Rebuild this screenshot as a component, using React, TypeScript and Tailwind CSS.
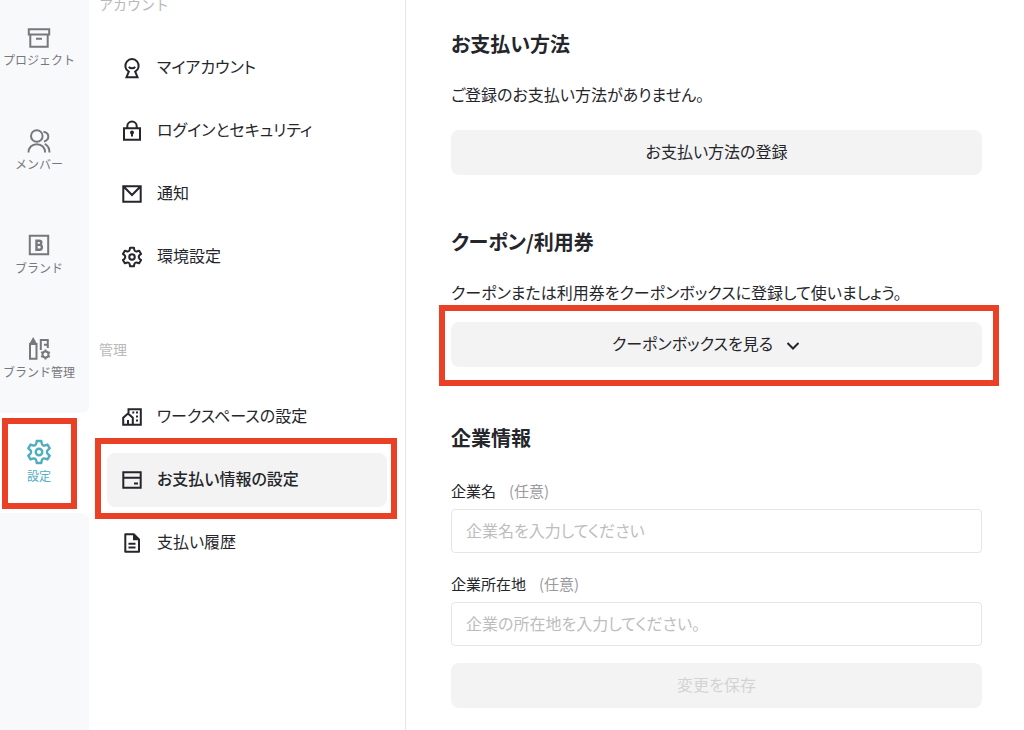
import type { ReactNode } from "react";
import clsx from "clsx";

type IconProps = { children: ReactNode; className?: string };

const Icon = ({ children, className = "size-6" }: IconProps) => (
  <svg
    viewBox="0 0 24 24"
    fill="none"
    stroke="currentColor"
    strokeWidth="2"
    aria-hidden="true"
    className={clsx("shrink-0", className)}
  >
    {children}
  </svg>
);

const GearIcon = ({ className }: { className?: string }) => (
  <Icon className={className}>
    <g transform="translate(12 12)" strokeLinejoin="round" strokeWidth="2.2">
      <path d="M-2.1-10.2H2.1L2.4-8.4Q3-5.200 5.900-6.200L7.800-6.900L9.900-3.300L8.400-2.100Q6.200 0 8.400 2.100L9.900 3.300L7.800 6.900L5.900 6.200Q3 5.200 2.400 8.400L2.100 10.200H-2.100L-2.400 8.400Q-3 5.200-5.900 6.200L-7.800 6.900L-9.900 3.300L-8.400 2.100Q-6.200 0-8.400-2.100L-9.900-3.300L-7.800-6.900L-5.900-6.200Q-3-5.200-2.400-8.400Z" />
      <circle r="3" />
    </g>
  </Icon>
);

const ProjectIcon = () => (
  <Icon>
    <path d="M1.8 4.2h20.4v5.3H1.8zM3.3 9.5v12.3h17.4V9.5M9 13.7h6" />
  </Icon>
);

const MembersIcon = () => (
  <Icon>
    <circle cx="9.8" cy="7" r="5.8" />
    <path d="M1.5 23.5c0-4.8 3.3-8.3 8.3-8.3s8.3 3.5 8.3 8.3M16.5 2.8c3 .6 4.8 2.4 4.8 4.7s-1.6 4.3-4.3 5M17.8 14.8c3 1.6 4.7 4.4 4.7 8.7" />
  </Icon>
);

const BrandIcon = () => (
  <Icon>
    <path d="M2.8 2.8h18.4v18.4H2.8z" />
    <path
      strokeWidth="2.4"
      d="M9.5 7.7v9h3a2.4 2.4 0 0 0 0-4.8h-3h2.7a2.1 2.1 0 0 0 0-4.2z"
    />
  </Icon>
);

const BrandManageIcon = () => (
  <Icon>
    <path d="M3 7v14.8h6.5V7z" />
    <path d="M6.2 0 10.4 7.500H2z" fill="currentColor" stroke="none" />
    <path d="M13.8 13V3h7v8M17 7.8h4" />
    <circle cx="18.5" cy="17.5" r="3" />
    <path d="M18.5 12.5v2M18.5 20.500v2M14.200 15l1.700 1M21.100 19l1.700 1M14.200 20l1.700-1M21.100 16l1.700-1" />
  </Icon>
);

const AccountIcon = () => (
  <Icon>
    <path d="M8.8 15.7a6.700 6.700 0 1 1 6.400 0l2.300 5.500H6.500z" />
    <path d="M8.8 10.8c1.700 2 4.700 2 6.400 0" />
  </Icon>
);

const LockIcon = () => (
  <Icon>
    <path d="M4 9.2h16v11.500H4zM7.300 9V7.300a4.700 4.700 0 0 1 9.400 0V9M12 13v4.500" />
    <circle cx="12" cy="13.500" r="1" />
  </Icon>
);

const MailIcon = () => (
  <Icon>
    <path d="M3.3 4.3h17.400v15.400H3.300zM3.800 4.800 12 13l8.200-8.200" />
  </Icon>
);

const WorkspaceIcon = () => (
  <Icon>
    <path d="M8.5 8V4.200h12.300v15.600H3.200v-7L8 8.500l4.800 4.300v7M8 20v-5" />
    <path d="M12.300 7.500h2M16 7.500h2M16 11.500h2M16 15.500h2" />
  </Icon>
);

const CardIcon = () => (
  <Icon>
    <path d="M3.300 4.200h17.400v15.600H3.300zM3.300 9.800h17.400M14 15.500h4" />
  </Icon>
);

const HistoryIcon = () => (
  <Icon>
    <path d="M5.300 3.300h8.500l5.200 5.200v12.200H5.300z" strokeLinejoin="round" />
    <path d="M13 3v6.300h6.300z" fill="currentColor" stroke="none" />
    <path d="M8.500 12.800h7M8.500 16.500h7" />
  </Icon>
);

const railItems = [
  { label: "プロジェクト", icon: <ProjectIcon /> },
  { label: "メンバー", icon: <MembersIcon /> },
  { label: "ブランド", icon: <BrandIcon /> },
  { label: "ブランド管理", icon: <BrandManageIcon /> },
];

const accountItems = [
  { label: "マイアカウント", icon: <AccountIcon /> },
  { label: "ログインとセキュリティ", icon: <LockIcon /> },
  { label: "通知", icon: <MailIcon /> },
  { label: "環境設定", icon: <GearIcon className="mx-px size-[22px]" /> },
];

const manageItems = [
  { label: "ワークスペースの設定", icon: <WorkspaceIcon /> },
  { label: "お支払い情報の設定", icon: <CardIcon />, active: true },
  { label: "支払い履歴", icon: <HistoryIcon /> },
];

const Highlight = ({ className }: { className: string }) => (
  <span
    className={clsx(
      "pointer-events-none absolute border-6 border-[#ea4025]",
      className
    )}
  />
);

const Rail = () => (
  <nav className="-mt-[3px] flex w-[89px] shrink-0 flex-col text-xs text-[#77787b] [font-feature-settings:normal]">
    <div className="rounded-br-lg bg-[#f8f9fb]">
      {railItems.map((item) => (
        <a
          key={item.label}
          href="#"
          className="flex h-26 flex-col items-center gap-[3px] pt-7 pr-[11px] whitespace-nowrap"
        >
          {item.icon}
          {item.label}
        </a>
      ))}
    </div>
    <a
      href="#"
      aria-current="page"
      className="relative flex h-25 flex-col items-center gap-[3px] pt-[26px] pr-[11px] text-[#4fadc0]"
    >
      <GearIcon className="size-[26px]" />
      設定
      <Highlight className="top-[5px] left-[2px] h-[91px] w-[75px]" />
    </a>
    <div className="flex-1 rounded-tr-lg bg-[#f8f9fb]" />
  </nav>
);

type MenuItem = { label: string; icon: ReactNode; active?: boolean };

const MenuList = ({ items }: { items: MenuItem[] }) => (
  <ul className="flex flex-col gap-[9px] px-2">
    {items.map((item) => (
      <li key={item.label} className="relative">
        <a
          href="#"
          className={clsx(
            "flex h-[54px] items-center gap-[13px] rounded-lg pl-[13px]",
            item.active && "bg-[#f3f3f3] font-medium"
          )}
        >
          {item.icon}
          <span className="pb-1">{item.label}</span>
        </a>
        {item.active && (
          <Highlight className="-top-[15px] -right-[10px] -bottom-3 -left-3" />
        )}
      </li>
    ))}
  </ul>
);

const headingClass = "text-sm/5 text-[#b9b9bb] [font-feature-settings:normal]";

const Sidebar = () => (
  <aside className="-mt-[6px] w-[317px] shrink-0 border-r border-[#e6e6e8] px-[10px]">
    <h2 className={clsx("mb-[27px]", headingClass)}>アカウント</h2>
    <MenuList items={accountItems} />
    <h2 className={clsx("mt-[55px] mb-[31px]", headingClass)}>管理</h2>
    <MenuList items={manageItems} />
  </aside>
);

type FieldProps = { id: string; label: string; placeholder: string };

const Field = ({ id, label, placeholder }: FieldProps) => (
  <div className="flex flex-col gap-2">
    <label htmlFor={id} className="flex gap-[13px] text-[15px]/5">
      {label} <span className="text-[#9b9b9f]">(任意)</span>
    </label>
    <input
      id={id}
      type="text"
      placeholder={placeholder}
      className="h-11 w-full rounded-sm border border-[#e6e6e8] px-[14px] pb-0.5 placeholder:text-[#bdbdbf]"
    />
  </div>
);

const PaymentSettings = () => (
  <main className="min-w-0 flex-1 pt-[30px] pr-[42px] pb-[22px] pl-[45px]">
    <section>
      <h1 className="text-xl/7 font-bold">お支払い方法</h1>
      <p className="mt-6 mb-6">ご登録のお支払い方法がありません。</p>
      <button type="button" className="h-[45px] w-full rounded-lg bg-[#f3f3f3] pb-[3px]">
        お支払い方法の登録
      </button>
    </section>
    <section className="mt-[53px]">
      <h2 className="text-xl/7 font-bold">クーポン/利用券</h2>
      <p className="mt-6 mb-[18px]">
        クーポンまたは利用券をクーポンボックスに登録して使いましょう。
      </p>
      <div className="relative">
        <button
          type="button"
          className="flex h-[45px] w-full items-center justify-center gap-2 rounded-lg bg-[#f3f3f3] pr-4"
        >
          <span className="pb-[3px]">クーポンボックスを見る</span>
          <Icon>
            <path d="m6.500 10 5.500 5.500 5.500-5.500" />
          </Icon>
        </button>
        <Highlight className="-top-[17px] -right-[17px] -bottom-[19px] -left-3" />
      </div>
    </section>
    <section className="mt-[57px]">
      <h2 className="text-xl/7 font-bold">企業情報</h2>
      <form className="mt-[29px]">
        <div className="flex flex-col gap-[21px]">
          <Field id="company-name" label="企業名" placeholder="企業名を入力してください" />
          <Field
            id="company-address"
            label="企業所在地"
            placeholder="企業の所在地を入力してください。"
          />
        </div>
        <button
          type="submit"
          disabled
          className="mt-[17px] h-[45px] w-full rounded-lg bg-[#f3f3f3] pb-[3px] text-[#d3d3d5]"
        >
          変更を保存
        </button>
      </form>
    </section>
  </main>
);

const App = () => {
  return (
    <div
      lang="ja"
      className="flex min-h-screen overflow-hidden bg-white font-['Noto_Sans_CJK_JP',sans-serif] text-base text-[#25262c] [font-feature-settings:'palt']"
    >
      <Rail />
      <Sidebar />
      <PaymentSettings />
    </div>
  );
};

export default App;
